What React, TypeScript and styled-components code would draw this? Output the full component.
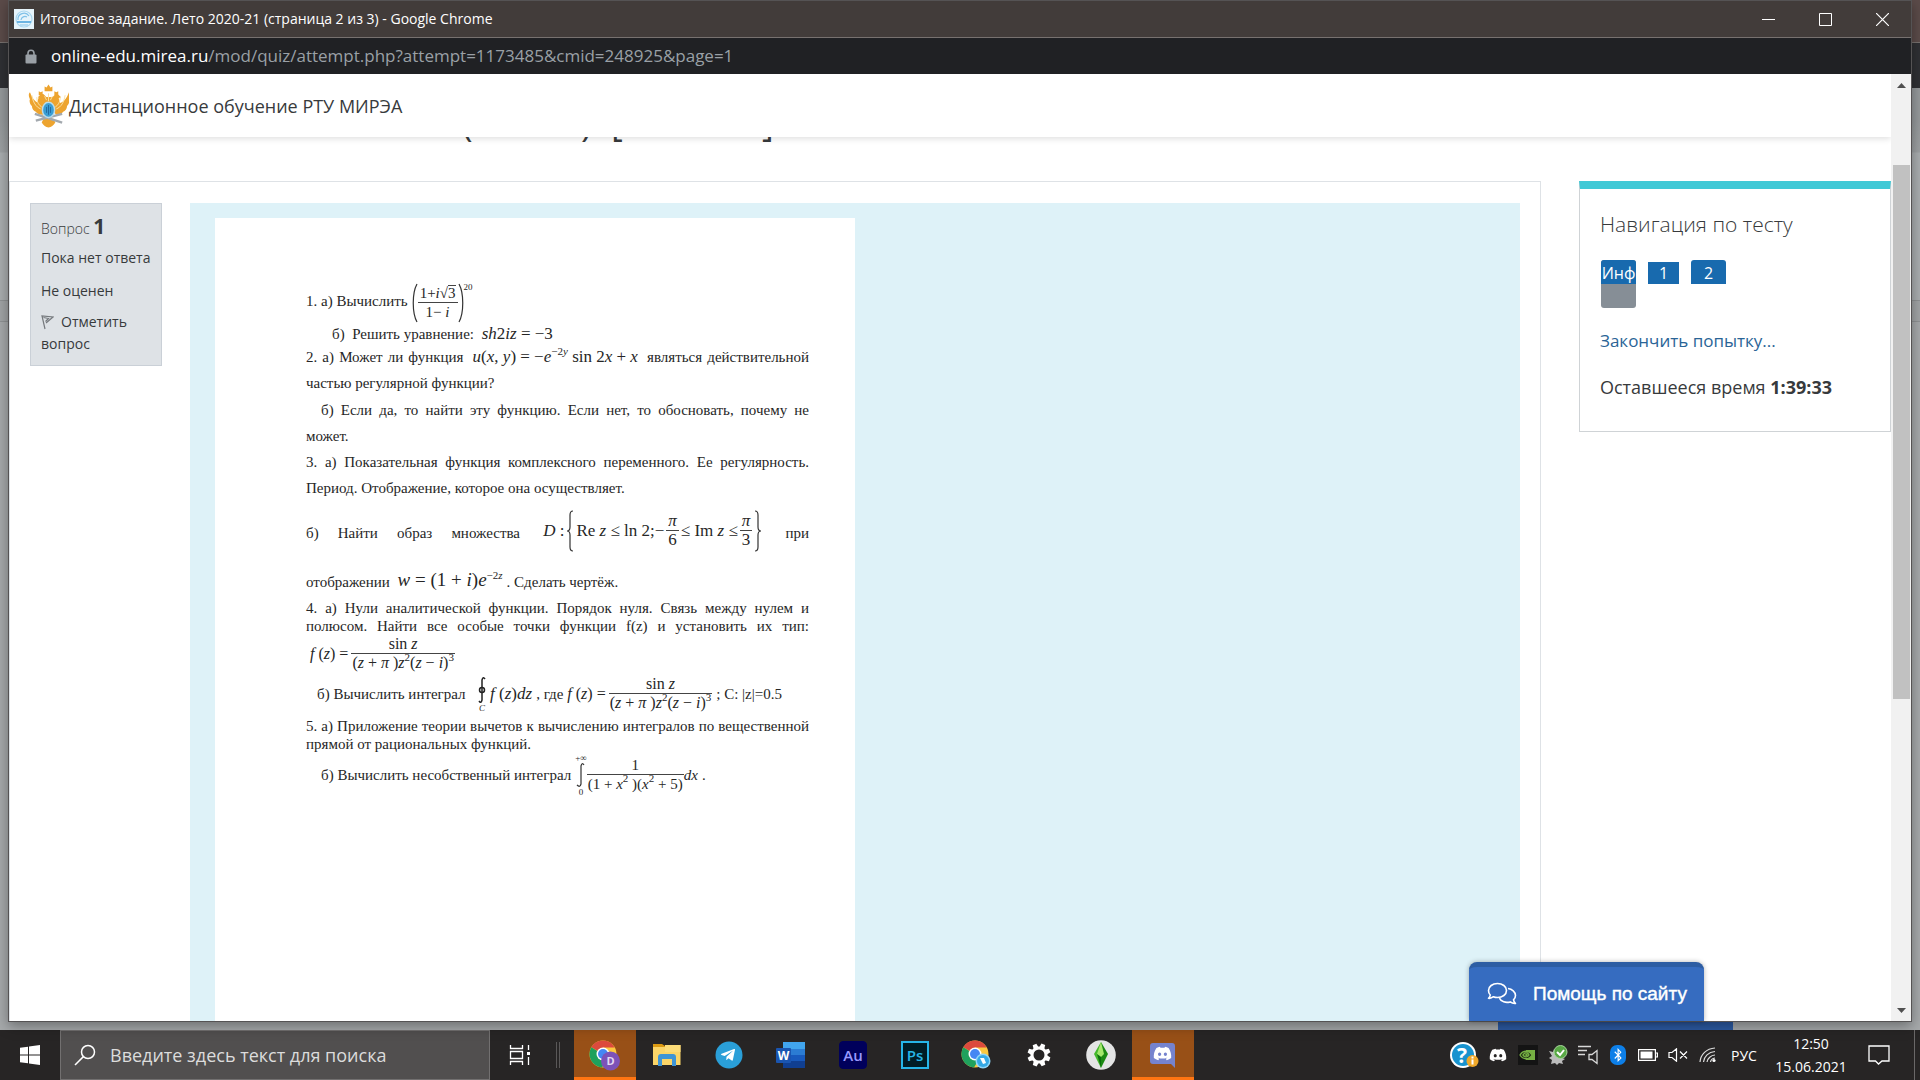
import React from 'react';
import styled, { createGlobalStyle, css } from 'styled-components';
import { FaDiscord, FaTelegramPlane, FaBluetoothB } from 'react-icons/fa';

const ui = '"Open Sans", "Noto Sans", sans-serif';
const serif = '"Liberation Serif", serif';

const GlobalStyle = createGlobalStyle`
  *, *::before, *::after { box-sizing: border-box; }
  body { margin: 0; font-family: ${ui}; color: #373a3c; overflow: hidden; }
  button, input { font-family: inherit; border: 0; padding: 0; background: none; }
  h1, h2, h3, p { margin: 0; font-weight: 400; }
  a { color: inherit; text-decoration: none; }
  svg { display: block; flex: none; }
`;

/* ---------- Desktop and window ---------- */

const Desktop = styled.div`
  height: 100vh;
  display: flex;
  flex-direction: column;
`;

const Backdrop = styled.div`
  position: relative;
  flex: 1;
  min-height: 0;
  display: flex;
  padding: 0 8px 8px;
  background: linear-gradient(
    #5b4b49 0 42px, #77716f 42px 43px, #2f3034 43px 88px, #95999b 88px 120px, #9da1a3 152px,
    #a9adaf 153px 300px, #8f9294 300px 301px, #a1a4a6 301px 321px, #8f9294 321px 322px, #a6a9ab 322px
  );
`;

const BackTab = styled.div`
  position: absolute;
  right: 187px;
  bottom: 0;
  width: 235px;
  height: 9px;
  background: #2c5aa3;
`;

const Window = styled.section`
  position: relative;
  flex: 1;
  display: flex;
  flex-direction: column;
  min-width: 0;
  border: 1px solid #555354;
  box-shadow: 0 4px 12px rgba(0, 0, 0, 0.35);
  background: #fff;
`;

const TitleBar = styled.header`
  flex: none;
  height: 37px;
  display: flex;
  align-items: center;
  gap: 6px;
  padding-left: 5px;
  background: #423c3a;
  border-bottom: 1px solid #77716f;
`;

const WindowTitle = styled.h1`
  flex: 1;
  font-size: 14px;
  line-height: 20px;
  color: #fff;
`;

const WindowControls = styled.div`
  display: flex;
`;

const WindowButton = styled.button`
  width: 57px;
  height: 36px;
  display: grid;
  place-items: center;
`;

const AddressBar = styled.div`
  flex: none;
  height: 36px;
  display: flex;
  align-items: center;
  gap: 14px;
  padding-left: 16px;
  background: #202124;
`;

const Url = styled.p`
  font-size: 17px;
  line-height: 24px;
  color: #9aa0a6;
`;

const Host = styled.span`
  color: #fff;
`;

/* ---------- Page ---------- */

const Viewport = styled.div`
  position: relative;
  flex: 1;
  min-height: 0;
  display: flex;
`;

const Page = styled.div`
  flex: 1;
  min-width: 0;
  display: flex;
  flex-direction: column;
  overflow: hidden;
`;

const SiteHeader = styled.header`
  position: relative;
  z-index: 1;
  flex: none;
  height: 63px;
  display: flex;
  align-items: center;
  padding-left: 19px;
  background: #fff;
  box-shadow: 0 2px 6px rgba(0, 0, 0, 0.12);
`;

const SiteName = styled.a`
  font-size: 18px;
  line-height: 24px;
`;

const HeadingStrip = styled.div`
  flex: none;
  height: 44px;
  padding-bottom: 38px;
  display: flex;
  align-items: flex-end;
  overflow: hidden;
`;

const CourseHeading = styled.h2`
  display: flex;
  padding-left: 32px;
  font-size: 36px;
  line-height: 40px;
`;

const HeadingPart = styled.span<{ $w: number }>`
  width: ${(p) => p.$w}px;
`;

const Columns = styled.div`
  flex: 1;
  min-height: 0;
  display: flex;
  align-items: flex-start;
  gap: 38px;
`;

const Main = styled.main`
  align-self: stretch;
  flex: 1;
  min-width: 0;
  display: flex;
  align-items: flex-start;
  gap: 28px;
  padding: 21px 20px 0;
  border: 1px solid #dee2e6;
  border-bottom: 0;
`;

const Info = styled.aside`
  flex: none;
  width: 132px;
  padding: 6px 10px 10px;
  background: #dee2e6;
  border: 1px solid #cad0d7;
  font-size: 14px;
  line-height: 22px;
  white-space: nowrap;
`;

const QuestionNumber = styled.h3`
  font-size: 14px;
  font-weight: 300;
  line-height: 32px;
  strong { font-size: 21px; font-weight: 700; }
`;

const InfoLine = styled.p`
  padding: 2px 0 9px;
`;

const FlagLink = styled.a`
  display: block;
  white-space: normal;
  svg { display: inline-block; vertical-align: -3px; margin-right: 7px; }
`;

const Formulation = styled.div`
  align-self: stretch;
  flex: 1;
  min-width: 0;
  display: flex;
  padding: 15px 25px 0;
  background: #def2f8;
`;

const Paper = styled.article`
  width: 640px;
  padding: 61px 46px 0 91px;
  background: #fff;
  font-family: ${serif};
  font-size: 15px;
  color: #262626;
`;

const Line = styled.div<{ $h: number; $justify?: boolean; $indent?: number }>`
  height: ${(p) => p.$h}px;
  line-height: ${(p) => p.$h}px;
  white-space: nowrap;
  padding-left: ${(p) => p.$indent ?? 0}px;
  ${(p) => p.$justify && css`white-space: normal; text-align: justify; text-align-last: justify;`}
`;

/* ---------- Formulas ---------- */

const Formula = styled.span<{ $size?: number; $gap?: number; $lift?: number }>`
  display: inline-flex;
  align-items: center;
  gap: ${(p) => p.$gap ?? 3}px;
  vertical-align: middle;
  margin: 0 4px ${(p) => p.$lift ?? 4}px;
  font-size: ${(p) => p.$size ?? 17}px;
  line-height: 18px;
  white-space: nowrap;
  text-align-last: auto;
  sup { font-size: 11px; line-height: 0; vertical-align: 7px; }
`;

const FracBox = styled.span`
  display: inline-flex;
  flex-direction: column;
  align-items: center;
`;

const Over = styled.span`
  align-self: stretch;
  text-align: center;
  padding: 0 2px;
  border-bottom: 1px solid #444;
`;

const Under = styled.span`
  padding: 0 1px;
`;

const Radicand = styled.span`
  border-top: 1px solid #444;
  line-height: 15px;
  display: inline-block;
`;

const Power = styled.span`
  align-self: flex-start;
  font-size: 9px;
  line-height: 8px;
`;

const Bounds = styled.span`
  display: inline-flex;
  flex-direction: column;
  align-items: center;
  font-size: 9px;
  line-height: 8px;
`;

const Frac = ({ top, bottom }: { top: React.ReactNode; bottom: React.ReactNode }) => (
  <FracBox>
    <Over>{top}</Over>
    <Under>{bottom}</Under>
  </FracBox>
);

const Stroke = ({ w, h, d }: { w: number; h: number; d: string }) => (
  <svg width={w} height={h} viewBox={`0 0 ${w} ${h}`} fill="none" stroke="#333" strokeWidth="1.2">
    <path d={d} />
  </svg>
);

const SinFraction = () => (
  <Frac
    top={<>sin <i>z</i></>}
    bottom={<>(<i>z</i> + <i>π</i> )<i>z</i><sup>2</sup>(<i>z</i> − <i>i</i>)<sup>3</sup></>}
  />
);

/* ---------- Navigation block ---------- */

const NavBlock = styled.aside`
  flex: none;
  width: 312px;
  padding: 21px 20px 31px;
  border: 1px solid #cfd3d6;
  border-top: 8px solid #40c9d6;
`;

const NavTitle = styled.h3`
  font-size: 21px;
  font-weight: 300;
  line-height: 28px;
  margin-bottom: 22px;
`;

const NavButtons = styled.nav`
  display: flex;
  gap: 10px;
  padding-left: 1px;
  margin-bottom: 20px;
`;

const NavButton = styled.a<{ $current?: boolean; $fill?: string }>`
  width: 35px;
  height: 48px;
  border-radius: 3px;
  overflow: hidden;
  background: ${(p) => p.$fill ?? '#fff'};
  padding: ${(p) => (p.$current ? '2px 2px 0' : '0')};
`;

const NavLabel = styled.span<{ $current?: boolean }>`
  display: block;
  height: ${(p) => (p.$current ? 22 : 24)}px;
  line-height: ${(p) => (p.$current ? 22 : 26)}px;
  font-size: 16px;
  text-align: center;
  color: #fff;
  background: #186aae;
`;

const FinishLink = styled.a`
  display: block;
  font-size: 17px;
  line-height: 26px;
  color: #2a6496;
  margin-bottom: 20px;
`;

const Timer = styled.p`
  font-size: 18px;
  line-height: 26px;
`;

/* ---------- Scrollbar and help ---------- */

const Scrollbar = styled.div`
  flex: none;
  width: 20px;
  display: flex;
  flex-direction: column;
  align-items: center;
  background: #f1f1f1;
`;

const ScrollArrow = styled.button`
  width: 20px;
  height: 22px;
  display: grid;
  place-items: center;
`;

const Track = styled.div`
  flex: 1;
  width: 17px;
  padding-top: 69px;
`;

const Thumb = styled.div`
  height: 64%;
  background: #c1c1c1;
`;

const HelpButton = styled.button`
  position: absolute;
  right: 207px;
  bottom: 0;
  width: 235px;
  height: 59px;
  display: flex;
  align-items: center;
  gap: 16px;
  padding-left: 18px;
  border-top: 5px solid #2d5da3;
  border-radius: 8px 8px 0 0;
  background: #366cc0;
  box-shadow: 0 0 5px rgba(0, 0, 0, 0.3);
  color: #fff;
  font-family: "Liberation Sans", sans-serif;
  font-size: 19px;
  -webkit-text-stroke: 0.4px #fff;
`;

/* ---------- Taskbar ---------- */

const Taskbar = styled.footer`
  flex: none;
  height: 50px;
  display: flex;
  background: #272525;
  color: #fff;
`;

const StartButton = styled.button`
  width: 60px;
  display: grid;
  place-items: center;
`;

const SearchBox = styled.label`
  width: 430px;
  display: flex;
  align-items: center;
  gap: 14px;
  padding-left: 13px;
  background: #514f4f;
  border: 1px solid #727070;
`;

const SearchInput = styled.input`
  flex: 1;
  min-width: 0;
  outline: 0;
  font-size: 18px;
  color: #fff;
  &::placeholder { color: #dcdcdc; opacity: 1; }
`;

const TaskView = styled.button`
  width: 60px;
  display: grid;
  place-items: center;
`;

const Divider = styled.div`
  align-self: center;
  width: 4px;
  height: 26px;
  margin: 0 14px 0 6px;
  border: 1px solid #5a5858;
  border-width: 0 1px;
`;

const AppButton = styled.button<{ $active?: boolean }>`
  width: 62px;
  display: grid;
  place-items: center;
  border-bottom: 3px solid ${(p) => (p.$active ? '#ff7512' : 'transparent')};
  border-top: 3px solid transparent;
  background: ${(p) => (p.$active ? '#985017' : 'transparent')};
`;

const AppTile = styled.span<{ $bg: string; $fg: string; $line?: string }>`
  width: 28px;
  height: 28px;
  display: grid;
  place-items: center;
  border: ${(p) => (p.$line ? 2 : 1)}px solid ${(p) => p.$line ?? p.$bg};
  border-radius: ${(p) => (p.$line ? 0 : 4)}px;
  background: ${(p) => p.$bg};
  color: ${(p) => p.$fg};
  font-size: 15px;
  font-weight: 600;
  line-height: 20px;
`;

const Tray = styled.div`
  margin-left: auto;
  display: flex;
`;

const TrayButton = styled.button<{ $w?: number }>`
  width: ${(p) => p.$w ?? 30}px;
  display: grid;
  place-items: center;
  color: #fff;
  font-size: 14px;
  line-height: 23px;
`;

const ShowDesktop = styled.button`
  width: 6px;
  margin-left: 13px;
  border-left: 1px solid #6a6868;
`;

/* ---------- Icons ---------- */

const SiteIcon = () => (
  <svg width="20" height="20" viewBox="0 0 20 20" fill="none">
    <rect width="20" height="20" fill="#e6f4fb" />
    <circle cx="10" cy="10" r="8" stroke="#a9d6ef" strokeWidth="1.2" />
    <path d="M4 11a6 6 0 0 1 11-4M7 11a4 4 0 0 1 6-3" stroke="#7fc1e8" strokeWidth="1.2" />
    <path d="M3 12h14v2H3z" fill="#6cb4e2" />
    <path d="M6 16h8" stroke="#a5d5f0" strokeWidth="1.5" />
  </svg>
);

const LockIcon = () => (
  <svg width="12" height="15" viewBox="0 0 12 15">
    <path d="M3 7V4.300a3 3 0 0 1 6 0V7" fill="none" stroke="#9aa0a6" strokeWidth="1.6" />
    <rect x="0.500" y="5.500" width="11" height="9" rx="1" fill="#9aa0a6" />
  </svg>
);

const Crest = () => (
  <svg width="41" height="46" viewBox="0 0 42 46">
    <g fill="#eda42f">
      <path d="M19 14 16 11c-3-1-4 2-6 3l3 1-2 5C6 18 4 14 2 9c-2 2-1 5 0 7-1 2 0 5 2 7 0 3 2 5 4 6 1 2 4 3 7 3l4-4h6l4 4c3 0 6-1 7-3 2-1 4-3 4-6 2-2 3-5 2-7 1-2 2-5 0-7-2 5-4 9-9 11l-2-5 3-1c-2-1-3-4-6-3l-3 3z" />
      <path d="M11 14h20l3 10-6 6H14l-6-6z" />
      <path d="M17 3l2 1 2-3 2 3 2-1v5h-8zM11 8l2 1 2-1v4h-4zM27 8l2 1 2-1v4h-4z" />
      <path d="M16 36h10l2 4c-2 3-4 5-7 5s-5-2-7-5z" />
    </g>
    <path d="M4 12c1 7 4 12 9 14M38 12c-1 7-4 12-9 14M9 14c0 5 2 8 5 10M33 14c0 5-2 8-5 10M21 10v8M17 13l2 4M25 13l-2 4" fill="none" stroke="#fbe0a0" strokeWidth="1" />
    <path d="M7 31l28 9M35 31 8 38" stroke="#a3a9ae" strokeWidth="2.500" />
    <ellipse cx="21" cy="27" rx="7" ry="8.500" fill="#b8dcec" />
    <ellipse cx="21" cy="27" rx="5.500" ry="7" fill="#3a9ed4" />
    <path d="M19 24v6M23 24v6M21 22v10" stroke="#2168a0" strokeWidth="1" fill="none" />
  </svg>
);

const Flag = () => (
  <svg width="13" height="15" viewBox="0 0 13 15" fill="none" stroke="#75797d" strokeWidth="1.200">
    <path d="M4 14 1 1l11 1-7 6M2.500 2.500l5 1-3 3" />
  </svg>
);

const Chats = () => (
  <svg width="30" height="24" viewBox="0 0 30 24" fill="none" stroke="#fff" strokeWidth="1.600" strokeLinejoin="round">
    <path d="M10.500 1.500c5 0 9 3 9 7s-4 7-9 7c-1.500 0-3-.3-4-.8-1.500 1.200-3.500 1.800-5 1.600 1-.8 1.600-2 1.800-3.300C2 11.800 1.500 10.200 1.500 8.500c0-4 4-7 9-7z" />
    <path d="M21 6.500c4 .5 7.500 3.300 7.500 7 0 1.800-.8 3.200-2 4.300.2 1.300 1 2.600 2 3.700-2 .2-4-.6-5.300-1.600-4.500 1.300-9.200-.2-10.800-3.700" />
  </svg>
);

const Windows = () => (
  <svg width="20" height="20" viewBox="0 0 20 20" fill="#fff">
    <path d="M0 2.800 8 1.700v7.800H0zM9 1.500 20 0v9.500H9zM0 10.500h8v7.800l-8-1.100zM9 10.500h11V20L9 18.500z" />
  </svg>
);

const Magnifier = () => (
  <svg width="22" height="22" viewBox="0 0 22 22" fill="none" stroke="#fff" strokeWidth="1.500">
    <circle cx="14" cy="8" r="6.500" />
    <path d="M9.400 12.600 1 21" />
  </svg>
);

const TaskViewIcon = () => (
  <svg width="22" height="20" viewBox="0 0 22 20" fill="none" stroke="#fff" strokeWidth="1.300">
    <path d="M1.500 0v3.500h12V0M1.500 20v-3.500h12V20M1.500 6.500h12v7h-12zM19.500 0v5M19.500 12v8" />
    <path d="M18 7h3v3h-3z" fill="#fff" stroke="none" />
  </svg>
);

const Chrome = ({ badge }: { badge: 'letter' | 'sync' }) => (
  <svg width="32" height="32" viewBox="0 0 32 32">
    <circle cx="14" cy="15" r="13.500" fill="#fbc840" />
    <path d="M14 15 2.300 8.200A13.500 13.500 0 0 1 25.700 8.500H14z" fill="#dc4a3d" />
    <path d="M2.300 8.200A13.500 13.500 0 0 0 13 28.500l6-10-5-3z" fill="#1fa15d" />
    <circle cx="14" cy="15" r="6.500" fill="#fff" />
    <circle cx="14" cy="15" r="5" fill="#4587f3" />
    {badge === 'letter' ? (
      <>
        <circle cx="21.500" cy="22" r="9.500" fill="#7c52b8" />
        <text x="21.500" y="26" textAnchor="middle" fill="#e3d9f2" fontSize="11" fontWeight="700" fontFamily="Open Sans">D</text>
      </>
    ) : (
      <>
        <circle cx="22" cy="22" r="7.500" fill="#8fd5f7" />
        <circle cx="22" cy="22" r="6" fill="#35a9e6" />
        <path d="M19 19l4 0 2 5-3 1z" fill="#fff" />
      </>
    )}
  </svg>
);

const Folder = () => (
  <svg width="28" height="26" viewBox="0 0 28 26">
    <path d="M0 2h9l3 2h2v4H0z" fill="#dc9a12" />
    <path d="M0 5h12l2-2h13.500v20H0z" fill="#fbd568" />
    <path d="M12 3h15.500v7H12z" fill="#fcdc78" />
    <path d="M5 24v-9q0-3 3-3h12q3 0 3 3v9h-4v-7H9v7z" fill="#3f95d6" />
  </svg>
);

const Telegram = () => (
  <svg width="28" height="28" viewBox="0 0 28 28">
    <circle cx="14" cy="14" r="13.500" fill="#2a9fd8" />
    <FaTelegramPlane x="5" y="6" size={16} color="#fff" />
  </svg>
);

const Word = () => (
  <svg width="30" height="28" viewBox="0 0 30 28">
    <path d="M7 1h22v7H7z" fill="#41a5ee" />
    <path d="M7 8h22v7H7z" fill="#2b7cd3" />
    <path d="M7 14h22v7H7z" fill="#185abd" />
    <path d="M7 20h22v7H7z" fill="#103f91" />
    <rect y="7" width="15" height="15" rx="1" fill="#1a55b0" />
    <text x="7.500" y="19" textAnchor="middle" fill="#fff" fontSize="12" fontWeight="700" fontFamily="Open Sans">W</text>
  </svg>
);

const Gear = () => (
  <svg width="24" height="24" viewBox="0 0 24 24">
    <g fill="#fff">
      {[0, 45, 90, 135, 180, 225, 270, 315].map((a) => (
        <path key={a} d="M10 0.500h4l.8 5H9.200z" transform={`rotate(${a + 22} 12 12)`} />
      ))}
    </g>
    <circle cx="12" cy="12" r="7" fill="none" stroke="#fff" strokeWidth="3" />
  </svg>
);

const Plumbob = () => (
  <svg width="30" height="30" viewBox="0 0 30 30">
    <circle cx="15" cy="15" r="14.800" fill="#e4e4e4" />
    <path d="M15 2 8 14l7 14z" fill="#45b82c" />
    <path d="M15 2l7 12-7 14z" fill="#1c8a13" />
    <path d="M15 2l3 12-3 3-4-3z" fill="#a5e86c" />
    <path d="M11 14l4 3v11z" fill="#0c6f0c" />
  </svg>
);

const DiscordApp = () => (
  <svg width="26" height="28" viewBox="0 0 26 28">
    <path d="M3 2h19q3 0 3 3v22l-4-4H3q-3 0-3-3V5q0-3 3-3z" fill="#7583ce" />
    <FaDiscord x="3" y="3" size={19} color="#fff" />
  </svg>
);

const HelpBadge = () => (
  <svg width="30" height="28" viewBox="0 0 30 28">
    <circle cx="14" cy="14" r="13" fill="#fff" />
    <circle cx="14" cy="14" r="11" fill="#1893cf" />
    <text x="13" y="22" textAnchor="middle" fill="#fff" fontSize="21" fontWeight="700" fontFamily="Open Sans">?</text>
    <circle cx="23.500" cy="20" r="6" fill="#f0a92b" />
    <path d="M22.500 15.500h2v2h-2zM22.500 18.500h2v5h-2z" fill="#fff" />
  </svg>
);

const Nvidia = () => (
  <svg width="20" height="20" viewBox="0 0 20 20" fill="none">
    <rect width="20" height="20" fill="#141414" />
    <path d="M8 5h9v10H8z" fill="#76b043" />
    <path d="M2 10c3-5 9-5 12 0-3 5-9 5-12 0zM5 10c2-3 5-3 6 0-1 2-4 3-6 0z" stroke="#76b043" strokeWidth="1.400" fill="#182512" />
    <circle cx="8.500" cy="10" r="1.300" fill="#76b043" />
  </svg>
);

const ShieldOk = () => (
  <svg width="20" height="20" viewBox="0 0 20 20">
    <path d="M1 6l4 1 1-3 3 3 5 6 3 1-3 2 1 3-4-1-2 2-2-2-4 1 1-4-3-2 3-2z" fill="#bcbcbc" />
    <circle cx="12.500" cy="7" r="6.500" fill="#58a845" stroke="#a7d59b" />
    <path d="M9 7l3 3 4-5" fill="none" stroke="#fff" strokeWidth="2" />
  </svg>
);

const Mixer = () => (
  <svg width="21" height="20" viewBox="0 0 21 20" fill="none" stroke="#d8d8d8" strokeWidth="1.300">
    <path d="M0 1.500h13M0 5.500h9M0 9.500h7M11 9.500h3l5-4v13l-5-4h-3z" />
  </svg>
);

const Bluetooth = () => (
  <svg width="16" height="20" viewBox="0 0 16 20">
    <rect width="16" height="20" rx="7" fill="#0d7fe8" />
    <FaBluetoothB x="1" y="3" size={14} color="#fff" />
  </svg>
);

const Battery = () => (
  <svg width="20" height="12" viewBox="0 0 20 12">
    <path d="M.6.600h16.800v10.800H.6zM18 4h1.400v4H18" fill="none" stroke="#fff" strokeWidth="1.200" />
    <path d="M2.500 2.500h12v7h-12z" fill="#fff" />
  </svg>
);

const Muted = () => (
  <svg width="20" height="14" viewBox="0 0 20 14" fill="none" stroke="#fff" strokeWidth="1.200">
    <path d="M1 4.500h3L8.500.8v12.400L4 9.500H1zM12 3.500l7 7M19 3.500l-7 7" />
  </svg>
);

const Wifi = () => (
  <svg width="18" height="16" viewBox="0 0 18 16" fill="none" stroke="#ddd" strokeWidth="1.200">
    <path d="M1 15C1.500 7.500 7.500 1.500 16 1M4.500 15C5 9.500 9.500 5 16 4.500M8 15c.5-3.500 4-6.800 8-7M11.500 15c.3-2 2.200-3.700 4.500-4" />
    <circle cx="15" cy="13.500" r="1.600" fill="#fff" stroke="none" />
  </svg>
);

const Notice = () => (
  <svg width="22" height="20" viewBox="0 0 22 20" fill="none" stroke="#fff" strokeWidth="1.300">
    <path d="M1 1h20v15h-7l-3.500 3L7.500 16H1z" />
  </svg>
);

const headingParts: [string, number][] = [
  ['о', 104], ['о', 43], ['о', 113], ['о', 48], ['о', 73], ['о', 40],
  ['(', 61], ['о', 29], ['о', 29], [')', 30], ['[', 68], ['о', 83], [']', 20],
];

const Sheet = () => (
  <Paper>
    <Line $h={44}>
      1. а) Вычислить
      <Formula $size={15} $gap={0} $lift={0}>
        <Stroke w={6} h={40} d="M5 1C0 10 0 30 5 39" />
        <Frac
          top={<>1+<i>i</i>√<Radicand>3</Radicand></>}
          bottom={<>1− <i>i</i></>}
        />
        <Stroke w={6} h={40} d="M1 1c5 9 5 29 0 38" />
        <Power>20</Power>
      </Formula>
    </Line>
    <Line $h={22} $indent={26}>
      б)&nbsp; Решить уравнение: <Formula><span><i>sh</i>2<i>iz</i> = −3</span></Formula>
    </Line>
    <Line $h={24} $justify>
      2. а) Может ли функция{' '}
      <Formula>
        <span><i>u</i>(<i>x</i>, <i>y</i>) = −<i>e</i><sup>−2<i>y</i></sup> sin 2<i>x</i> + <i>x</i></span>
      </Formula>{' '}
      являться действительной
    </Line>
    <Line $h={28}>частью регулярной функции?</Line>
    <Line $h={26} $justify $indent={15}>б) Если да, то найти эту функцию. Если нет, то обосновать, почему не</Line>
    <Line $h={26}>может.</Line>
    <Line $h={26} $justify>3. а) Показательная функция комплексного переменного. Ее регулярность.</Line>
    <Line $h={26}>Период. Отображение, которое она осуществляет.</Line>
    <Line $h={64} $justify>
      б) Найти образ множества{' '}
      <Formula $size={17} $gap={2} $lift={8}>
        <span><i>D</i> :</span>
        <Stroke w={8} h={42} d="M7 1Q4 1 4 5V17Q4 21 1 21 4 21 4 25V37Q4 41 7 41" />
        <span>Re <i>z</i> ≤ ln 2;−</span>
        <Frac top={<i>π</i>} bottom="6" />
        <span>≤ Im <i>z</i> ≤</span>
        <Frac top={<i>π</i>} bottom="3" />
        <Stroke w={8} h={42} d="M1 1Q4 1 4 5V17Q4 21 7 21 4 21 4 25V37Q4 41 1 41" />
      </Formula>{' '}
      при
    </Line>
    <Line $h={34}>
      отображении{' '}
      <Formula $size={19} $lift={8}>
        <span><i>w</i> = (1 + <i>i</i>)<i>e</i><sup>−2<i>z</i></sup></span>
      </Formula>
      . Сделать чертёж.
    </Line>
    <Line $h={18} $justify>4. а) Нули аналитической функции. Порядок нуля. Связь между нулем и</Line>
    <Line $h={18} $justify>полюсом. Найти все особые точки функции f(z) и установить их тип:</Line>
    <Line $h={36}>
      <Formula $size={16}>
        <span><i>f</i> (<i>z</i>) =</span>
        <SinFraction />
      </Formula>
    </Line>
    <Line $h={46} $indent={11}>
      б) Вычислить интеграл&nbsp;{' '}
      <Formula $size={17}>
        <Bounds>
          <svg width="10" height="28" viewBox="0 0 10 28" fill="none" stroke="#222" strokeWidth="1.500">
            <path d="M8 3Q6 0 5 4V24Q4 28 2 25" />
            <circle cx="5" cy="14" r="2.500" />
          </svg>
          <i>C</i>
        </Bounds>
        <span><i>f</i> (<i>z</i>)<i>dz</i></span>
      </Formula>
      , где
      <Formula $size={16}>
        <span><i>f</i> (<i>z</i>) =</span>
        <SinFraction />
      </Formula>
      ; C: |z|=0.5
    </Line>
    <Line $h={18} $justify>5. а) Приложение теории вычетов к вычислению интегралов по вещественной</Line>
    <Line $h={18}>прямой от рациональных функций.</Line>
    <Line $h={44} $indent={15}>
      б) Вычислить несобственный интеграл
      <Formula $size={15} $gap={0}>
        <Bounds>
          <span>+∞</span>
          <Stroke w={9} h={26} d="M8 3Q6 0 5 4V22Q4 26 1 23" />
          <span>0</span>
        </Bounds>
        <Frac top="1" bottom={<>(1 + <i>x</i><sup>2</sup> )(<i>x</i><sup>2</sup> + 5)</>} />
        <i>dx</i>
      </Formula>
      .
    </Line>
  </Paper>
);

export default function App() {
  return (
    <Desktop>
      <GlobalStyle />
      <Backdrop>
        <BackTab />
        <Window>
          <TitleBar>
            <SiteIcon />
            <WindowTitle>Итоговое задание. Лето 2020-21 (страница 2 из 3) - Google Chrome</WindowTitle>
            <WindowControls>
              <WindowButton aria-label="Свернуть">
                <svg width="13" height="13" stroke="#fff"><path d="M0 6.500h13" /></svg>
              </WindowButton>
              <WindowButton aria-label="Развернуть">
                <svg width="13" height="13" stroke="#fff" fill="none"><path d="M.5.500h12v12H.5z" /></svg>
              </WindowButton>
              <WindowButton aria-label="Закрыть">
                <svg width="13" height="13" stroke="#fff" strokeWidth="1.200"><path d="M0 0l13 13M13 0 0 13" /></svg>
              </WindowButton>
            </WindowControls>
          </TitleBar>
          <AddressBar>
            <LockIcon />
            <Url><Host>online-edu.mirea.ru</Host>/mod/quiz/attempt.php?attempt=1173485&amp;cmid=248925&amp;page=1</Url>
          </AddressBar>
          <Viewport>
            <Page>
              <SiteHeader>
                <Crest />
                <SiteName href="#">Дистанционное обучение РТУ МИРЭА</SiteName>
              </SiteHeader>
              <HeadingStrip>
                <CourseHeading>
                  {headingParts.map(([text, width], i) => (
                    <HeadingPart key={i} $w={width}>{text}</HeadingPart>
                  ))}
                </CourseHeading>
              </HeadingStrip>
              <Columns>
                <Main>
                  <Info>
                    <QuestionNumber>Вопрос <strong>1</strong></QuestionNumber>
                    <InfoLine>Пока нет ответа</InfoLine>
                    <InfoLine>Не оценен</InfoLine>
                    <FlagLink href="#"><Flag />Отметить вопрос</FlagLink>
                  </Info>
                  <Formulation>
                    <Sheet />
                  </Formulation>
                </Main>
                <NavBlock>
                  <NavTitle>Навигация по тесту</NavTitle>
                  <NavButtons>
                    <NavButton href="#" $fill="#868e96"><NavLabel>Инф</NavLabel></NavButton>
                    <NavButton href="#" $current><NavLabel $current>1</NavLabel></NavButton>
                    <NavButton href="#"><NavLabel>2</NavLabel></NavButton>
                  </NavButtons>
                  <FinishLink href="#">Закончить попытку...</FinishLink>
                  <Timer>Оставшееся время <strong>1:39:33</strong></Timer>
                </NavBlock>
              </Columns>
            </Page>
            <Scrollbar>
              <ScrollArrow aria-label="Вверх">
                <svg width="9" height="5" fill="#505050"><path d="M0 5 4.500 0 9 5z" /></svg>
              </ScrollArrow>
              <Track><Thumb /></Track>
              <ScrollArrow aria-label="Вниз">
                <svg width="9" height="5" fill="#505050"><path d="M0 0h9L4.500 5z" /></svg>
              </ScrollArrow>
            </Scrollbar>
            <HelpButton><Chats />Помощь по сайту</HelpButton>
          </Viewport>
        </Window>
      </Backdrop>
      <Taskbar>
        <StartButton aria-label="Пуск"><Windows /></StartButton>
        <SearchBox>
          <Magnifier />
          <SearchInput placeholder="Введите здесь текст для поиска" aria-label="Поиск" />
        </SearchBox>
        <TaskView aria-label="Представление задач"><TaskViewIcon /></TaskView>
        <Divider />
        <AppButton $active aria-label="Chrome"><Chrome badge="letter" /></AppButton>
        <AppButton aria-label="Проводник"><Folder /></AppButton>
        <AppButton aria-label="Telegram"><Telegram /></AppButton>
        <AppButton aria-label="Word"><Word /></AppButton>
        <AppButton><AppTile $bg="#00005b" $fg="#9999ff">Au</AppTile></AppButton>
        <AppButton><AppTile $bg="#001d26" $fg="#26b5e8" $line="#26b5e8">Ps</AppTile></AppButton>
        <AppButton aria-label="Chrome"><Chrome badge="sync" /></AppButton>
        <AppButton aria-label="Параметры"><Gear /></AppButton>
        <AppButton aria-label="Sims"><Plumbob /></AppButton>
        <AppButton $active aria-label="Discord"><DiscordApp /></AppButton>
        <Tray>
          <TrayButton $w={38} aria-label="Справка"><HelpBadge /></TrayButton>
          <TrayButton aria-label="Discord"><FaDiscord size={18} /></TrayButton>
          <TrayButton aria-label="NVIDIA"><Nvidia /></TrayButton>
          <TrayButton aria-label="Защита"><ShieldOk /></TrayButton>
          <TrayButton aria-label="Микшер"><Mixer /></TrayButton>
          <TrayButton aria-label="Bluetooth"><Bluetooth /></TrayButton>
          <TrayButton aria-label="Батарея"><Battery /></TrayButton>
          <TrayButton aria-label="Звук"><Muted /></TrayButton>
          <TrayButton aria-label="Сеть"><Wifi /></TrayButton>
          <TrayButton $w={42}>РУС</TrayButton>
          <TrayButton $w={92}><span>12:50<br />15.06.2021</span></TrayButton>
          <TrayButton $w={44} aria-label="Уведомления"><Notice /></TrayButton>
          <ShowDesktop aria-label="Показать рабочий стол" />
        </Tray>
      </Taskbar>
    </Desktop>
  );
}
